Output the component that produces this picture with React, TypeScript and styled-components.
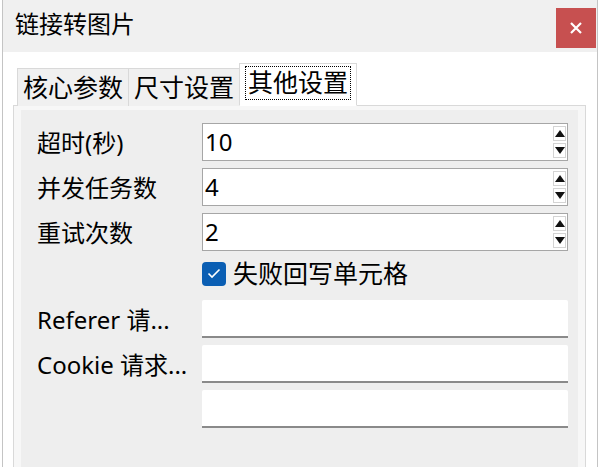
import React from 'react';
import styled, { createGlobalStyle } from 'styled-components';

const GlobalStyle = createGlobalStyle`
  html, body {
    margin: 0;
    padding: 0;
    background: #ffffff;
    overflow: hidden;
  }
  * {
    box-sizing: border-box;
  }
`;

const FONT = `"Noto Sans", "Noto Sans CJK SC", sans-serif`;

const Screen = styled.div`
  width: 601px;
  height: 467px;
  overflow: hidden;
  font-family: ${FONT};
  color: #000;
`;

const Window = styled.div`
  margin-left: 2px;
  width: 596px;
  height: 467px;
  border-left: 1px solid #c4c4c4;
  border-right: 1px solid #c4c4c4;
  background: #ffffff;
  display: flex;
  flex-direction: column;
`;

const TitleBar = styled.div`
  height: 52px;
  flex-shrink: 0;
  background: #f0f0f0;
  display: flex;
  align-items: flex-start;
  padding-left: 12px;
`;

const Title = styled.div`
  font-size: 24px;
  line-height: 1;
  margin-top: 12px;
`;

const CloseButton = styled.div`
  margin-left: auto;
  margin-top: 8px;
  margin-right: 1px;
  width: 40px;
  height: 40px;
  background: #c75050;
  display: flex;
  align-items: center;
  justify-content: center;
`;

const Body = styled.div`
  flex: 1;
  display: flex;
  flex-direction: column;
  padding: 11px 11px 0 10px;
  min-height: 0;
`;

const TabBar = styled.div`
  display: flex;
  align-items: flex-end;
  padding-left: 4px;
  height: 43px;
  margin-bottom: -1px;
  position: relative;
  z-index: 1;
`;

const Tab = styled.div<{ $active?: boolean }>`
  height: ${({ $active }) => ($active ? '43px' : '38px')};
  margin-left: ${({ $active }) => ($active ? '-1px' : '-1px')};
  margin-right: ${({ $active }) => ($active ? '-2px' : '0')};
  padding: ${({ $active }) => ($active ? '0 6px 4px' : '0 5px')};
  border: 1px solid #d9d9d9;
  border-bottom: ${({ $active }) => ($active ? '1px solid #ffffff' : 'none')};
  background: ${({ $active }) => ($active ? '#ffffff' : '#f0f0f0')};
  display: flex;
  align-items: center;
  font-size: 25px;
  line-height: 1;
  white-space: nowrap;

  &:first-child {
    margin-left: 0;
  }
`;

const FocusText = styled.span`
  outline: 1px dotted #000;
  padding: 3px 2px 4px;
`;

const Panel = styled.div`
  flex: 1;
  border: 1px solid #d9d9d9;
  border-bottom: none;
  background: #f7f7f7;
  padding: 4px 7px 0 7px;
  display: flex;
  min-height: 0;
`;

const Page = styled.div`
  flex: 1;
  background: #eeeeee;
  padding: 13px 10px 0 16px;
  display: grid;
  grid-template-columns: 165px 1fr;
  grid-template-rows: 38px 38px 38px 35px 38px 38px 38px;
  row-gap: 7px;
  align-content: start;
  align-items: center;
`;

const Label = styled.div`
  font-size: 24px;
  line-height: 1;
  white-space: nowrap;
  padding-top: 2px;
`;

const SpinBox = styled.div`
  grid-column: 2;
  height: 38px;
  border: 1px solid #a6a6a6;
  background: #ffffff;
  display: flex;
  align-items: center;
  padding-left: 2px;
`;

const Value = styled.span`
  font-size: 24px;
  line-height: 1;
`;

const SpinButtons = styled.div`
  margin-left: auto;
  margin-right: 1px;
  display: flex;
  flex-direction: column;
  gap: 2px;
`;

const SpinButton = styled.div`
  width: 13px;
  height: 15px;
  border: 1px solid #d4d4d4;
  background: #ffffff;
  display: flex;
  align-items: center;
  justify-content: center;
`;

const CheckRow = styled.label`
  grid-column: 2;
  align-self: start;
  display: flex;
  align-items: center;
  gap: 7px;
  padding-top: 3px;
  font-size: 25px;
  line-height: 1;
`;

const CheckBox = styled.span`
  width: 24px;
  height: 24px;
  border-radius: 4px;
  background: #0a5eb3;
  display: flex;
  align-items: center;
  justify-content: center;
`;

const TextField = styled.div`
  grid-column: 2;
  height: 38px;
  background: #ffffff;
  border-bottom: 2px solid #8a8a8a;
  border-radius: 2px 2px 0 0;
`;

const Arrow = ({ up }: { up?: boolean }) => (
  <svg width="10" height="7" viewBox="0 0 10 7">
    <polygon points={up ? '5,0 10,7 0,7' : '0,0 10,0 5,7'} fill="#111" />
  </svg>
);

const Spin = ({ value }: { value: string }) => (
  <SpinBox>
    <Value>{value}</Value>
    <SpinButtons>
      <SpinButton>
        <Arrow up />
      </SpinButton>
      <SpinButton>
        <Arrow />
      </SpinButton>
    </SpinButtons>
  </SpinBox>
);

export default function App() {
  return (
    <Screen>
      <GlobalStyle />
      <Window>
        <TitleBar>
          <Title>链接转图片</Title>
          <CloseButton>
            <svg width="12" height="12" viewBox="0 0 12 12">
              <path d="M1 1 L11 11 M11 1 L1 11" stroke="#fff" strokeWidth="2.2" />
            </svg>
          </CloseButton>
        </TitleBar>
        <Body>
          <TabBar>
            <Tab>核心参数</Tab>
            <Tab>尺寸设置</Tab>
            <Tab $active>
              <FocusText>其他设置</FocusText>
            </Tab>
          </TabBar>
          <Panel>
            <Page>
              <Label>超时(秒)</Label>
              <Spin value="10" />
              <Label>并发任务数</Label>
              <Spin value="4" />
              <Label>重试次数</Label>
              <Spin value="2" />
              <CheckRow>
                <CheckBox>
                  <svg width="14" height="11" viewBox="0 0 14 11">
                    <path d="M1.5 5.5 L5 9 L12.5 1.5" stroke="#fff" strokeWidth="1.6" fill="none" />
                  </svg>
                </CheckBox>
                失败回写单元格
              </CheckRow>
              <Label>Referer 请...</Label>
              <TextField />
              <Label>Cookie 请求...</Label>
              <TextField />
              <TextField />
            </Page>
          </Panel>
        </Body>
      </Window>
    </Screen>
  );
}
